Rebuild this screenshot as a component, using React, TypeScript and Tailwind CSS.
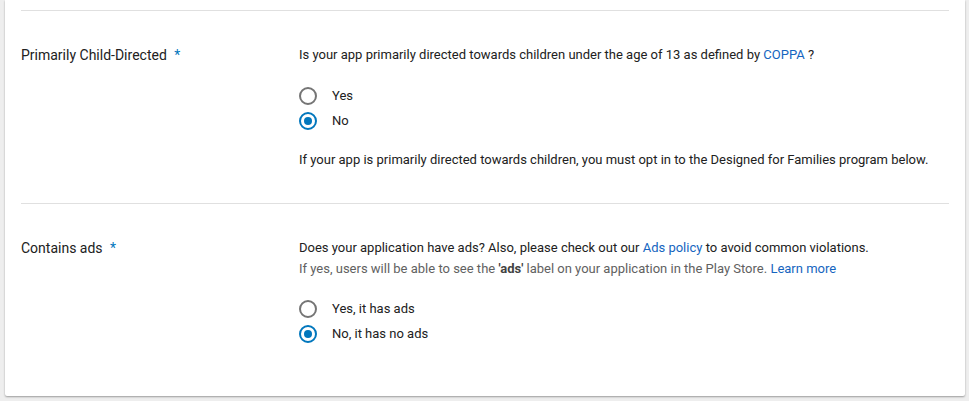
import React from "react";

function Radio({ label, checked }: { label: string; checked?: boolean }) {
  return (
    <div className="flex h-[25px] items-center gap-[15px]">
      {checked ? (
        <span className="flex h-[18px] w-[18px] items-center justify-center rounded-full border-2 border-[#0277bd]">
          <span className="h-[8px] w-[8px] rounded-full bg-[#0277bd]" />
        </span>
      ) : (
        <span className="h-[18px] w-[18px] rounded-full border-2 border-[#757575]" />
      )}
      <span className="text-[13px] text-[#212121]">{label}</span>
    </div>
  );
}

function Section({
  label,
  children,
  last,
}: {
  label: string;
  children: React.ReactNode;
  last?: boolean;
}) {
  return (
    <div
      className={
        "flex border-t border-[#e0e0e0] pt-[34px] " + (last ? "pb-[50px]" : "pb-[33px]")
      }
    >
      <div className="w-[278px] shrink-0 text-[14px] text-[#212121]">
        {label} <span className="ml-1 text-[#0277bd]">*</span>
      </div>
      <div className="flex-1 text-[13px]">{children}</div>
    </div>
  );
}

export default function App() {
  return (
    <main className="min-h-screen bg-[#eeeeee] pb-[6px] font-['Roboto',sans-serif] text-[14px] leading-[20px]">
      <div className="ml-[5px] w-[960px] rounded-b-[2px] bg-white px-4 pt-[10px] shadow-[0_1px_2px_rgba(0,0,0,0.35)]">
        <Section label="Primarily Child-Directed">
          <p className="text-[#212121]">
            Is your app primarily directed towards children under the age of 13 as defined by{" "}
            <a className="text-[#1565c0]" href="#">
              COPPA
            </a>{" "}
            ?
          </p>
          <div className="mt-[18px] flex flex-col">
            <Radio label="Yes" />
            <Radio label="No" checked />
          </div>
          <p className="mt-[17px] text-[#212121]">
            If your app is primarily directed towards children, you must opt in to the Designed for
            Families program below.
          </p>
        </Section>
        <Section label="Contains ads" last>
          <p className="text-[#212121]">
            Does your application have ads? Also, please check out our{" "}
            <a className="text-[#1565c0]" href="#">
              Ads policy
            </a>{" "}
            to avoid common violations.
          </p>
          <p className="mt-[1px] text-[#616161]">
            If yes, users will be able to see the <b className="font-bold text-[#424242]">'ads'</b>{" "}
            label on your application in the Play Store.{" "}
            <a className="text-[#1565c0]" href="#">
              Learn more
            </a>
          </p>
          <div className="mt-[17px] flex flex-col">
            <Radio label="Yes, it has ads" />
            <Radio label="No, it has no ads" checked />
          </div>
        </Section>
      </div>
    </main>
  );
}
